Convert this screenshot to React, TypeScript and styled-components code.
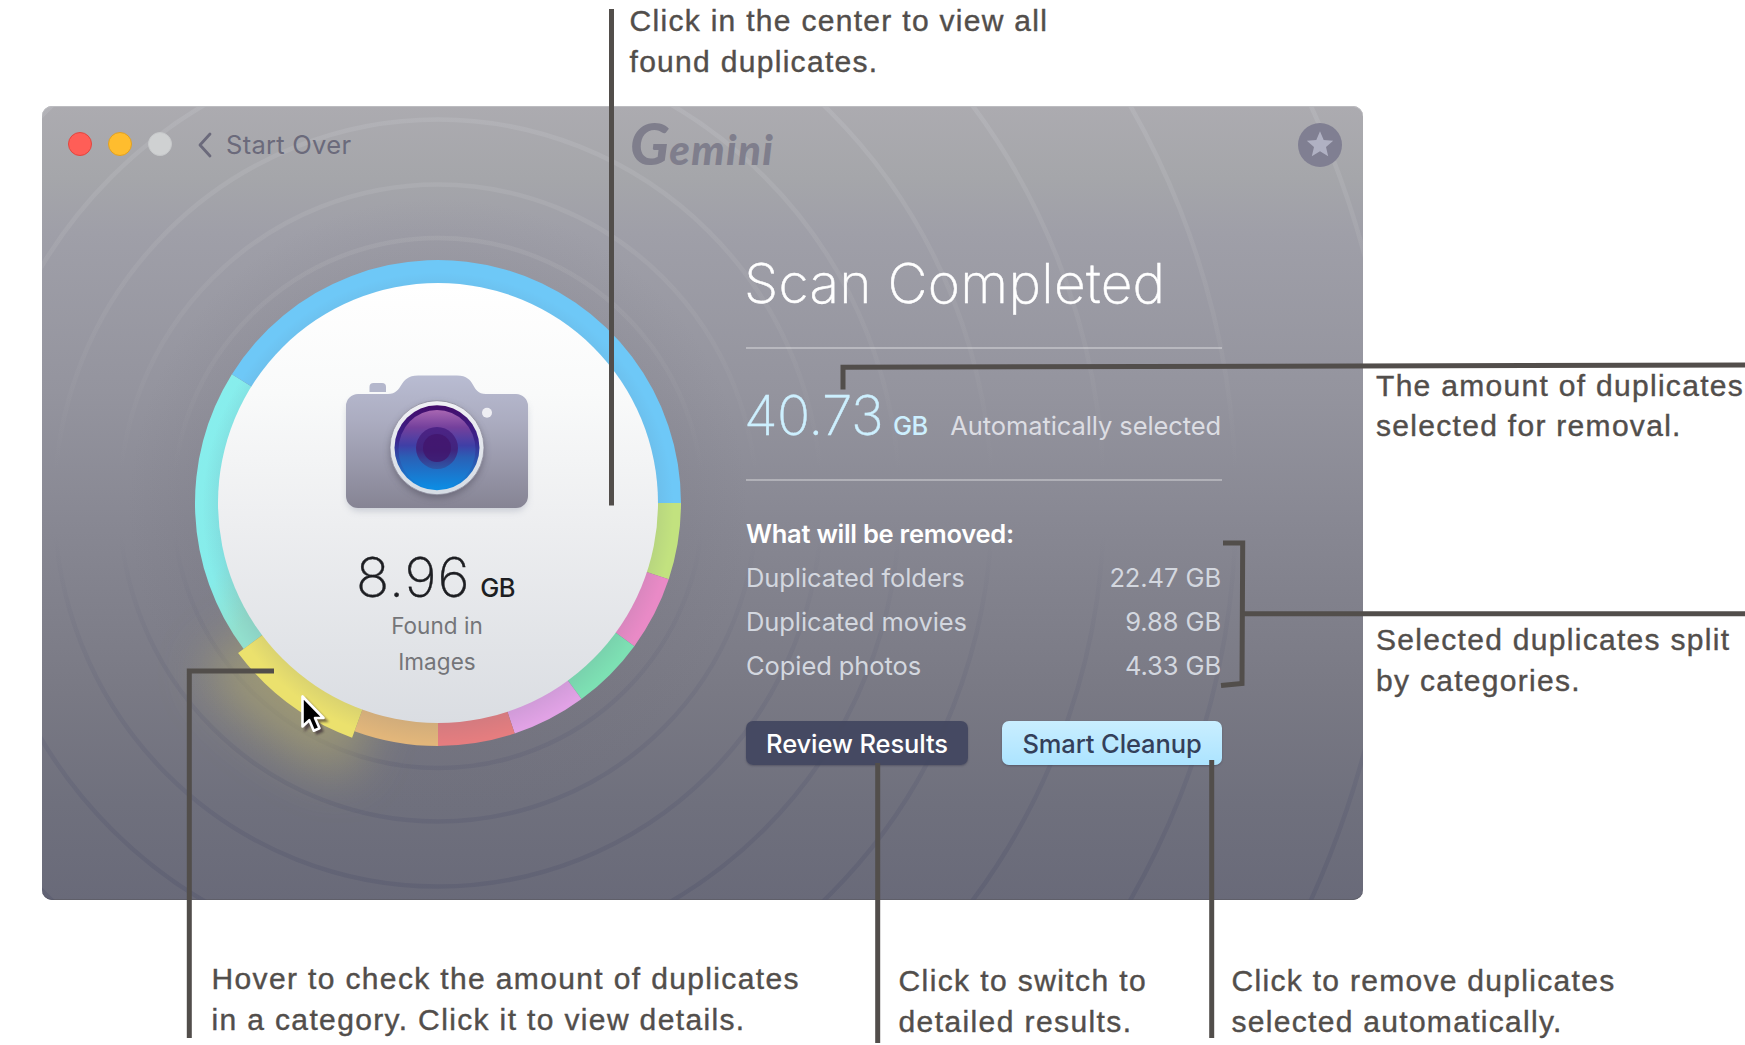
import React from "react";
import styled, { createGlobalStyle } from "styled-components";

const GlobalStyle = createGlobalStyle`
  html, body { margin: 0; padding: 0; background: #fff; }
  *, *::before, *::after { box-sizing: border-box; }
`;

const uiFont = `Inter, "Open Sans", sans-serif`;

const Page = styled.main`
  position: relative;
  width: 1745px;
  height: 1045px;
  overflow: hidden;
  background: #fff;
  display: flex;
  flex-direction: column;
`;

const TopRow = styled.div`
  height: 106px;
  padding-left: 629.5px;
`;

const MiddleRow = styled.div`
  display: flex;
  height: 794px;
  padding-left: 42px;
`;

const SideNotes = styled.div`
  display: flex;
  flex-direction: column;
  gap: 172px;
  padding: 260px 0 0 13px;
`;

const BottomRow = styled.div`
  display: grid;
  grid-template-columns: 687px 333px 1fr;
  align-items: start;
  padding: 58px 0 0 211.5px;
`;

const Note = styled.p<{ $drop?: number; $track?: number; $leading?: number }>`
  margin: 0;
  padding-top: ${(p) => p.$drop ?? 0}px;
  font-family: "Liberation Sans", Arial, sans-serif;
  font-size: 30px;
  line-height: ${(p) => p.$leading ?? 41}px;
  letter-spacing: ${(p) => p.$track ?? 1.3}px;
  color: #524e4b;
  -webkit-text-stroke: 0.4px #524e4b;
  white-space: nowrap;
`;

const AppWindow = styled.section`
  position: relative;
  flex: none;
  width: 1321px;
  height: 794px;
  border-radius: 10px;
  overflow: hidden;
  isolation: isolate;
  font-family: ${uiFont};
  background: linear-gradient(
    180deg,
    #acabb0 0%,
    #a5a6aa 9%,
    #9f9fa8 16%,
    #94949e 36%,
    #888893 52%,
    #797984 74%,
    #6f707d 88%,
    #696a79 100%
  );
  box-shadow: inset 0 1px 0 #bcbcc0, inset 0 -1px 0 #5f5f69;
`;

const Backdrop = styled.svg`
  position: absolute;
  inset: 0;
  z-index: -1;
`;

const TitleBar = styled.header`
  display: grid;
  grid-template-columns: 1fr 146px 1fr;
  align-items: center;
  height: 78px;
  padding: 0 21px 0 26px;
`;

const TitleLeft = styled.div`
  display: flex;
  align-items: center;
`;

const Light = styled.span<{ $fill: string; $rim: string }>`
  width: 24px;
  height: 24px;
  margin: 0 16px 2px 0;
  border-radius: 50%;
  background: ${(p) => p.$fill};
  border: 1px solid ${(p) => p.$rim};
`;

const BackButton = styled.button`
  display: flex;
  align-items: center;
  gap: 14px;
  padding: 0 0 0 10px;
  border: 0;
  background: none;
  color: #6b6a7b;
  font: 400 25.5px/32px ${uiFont};
  letter-spacing: 0.28px;
  white-space: nowrap;
`;

const Wordmark = styled.div`
  display: flex;
  align-items: baseline;
  height: 60px;
  margin: -4px 0 0 -2px;
  font-family: Lato, "Open Sans", sans-serif;
  font-style: italic;
  font-weight: 900;
  color: #7f7e8c;
  white-space: nowrap;
`;

const Initial = styled.span`
  font-size: 58px;
  line-height: 60px;
  letter-spacing: 0;
`;

const Rest = styled.span`
  font-size: 42px;
  line-height: 60px;
  letter-spacing: 1.4px;
`;

const BadgeSlot = styled.div`
  display: flex;
  justify-content: flex-end;
`;

const Body = styled.div`
  display: flex;
  align-items: flex-start;
  padding-left: 153px;
`;

const Dial = styled.div`
  display: grid;
  flex: none;
  width: 486px;
  height: 486px;
  margin-top: 76px;
  & > * { grid-area: 1 / 1; }
`;

const Ring = styled.svg`
  overflow: visible;
`;

const DialContent = styled.div`
  display: flex;
  flex-direction: column;
  align-items: center;
  padding: 110px 2px 0 0;
`;

const DialAmount = styled.div`
  display: flex;
  align-items: baseline;
  gap: 10px;
  height: 66px;
  margin: 24px 3px 0 0;
  line-height: 66px;
  color: #1d1e22;
`;

const Figure = styled.span<{ $track?: number }>`
  font-size: 55px;
  font-weight: 200;
  letter-spacing: ${(p) => p.$track ?? 0}px;
  -webkit-text-stroke: 0.4px currentColor;
`;

const Unit = styled.span`
  font-size: 25.5px;
  font-weight: 500;
  letter-spacing: -0.6px;
`;

const DialCaption = styled.div`
  width: 140px;
  margin-top: -2px;
  text-align: center;
  font-size: 22.5px;
  line-height: 36px;
  letter-spacing: 0.05px;
  color: #747579;
`;

const Panel = styled.div`
  width: 476px;
  margin: 66px 0 0 65px;
`;

const Heading = styled.h1`
  margin: 0 0 31px -2px;
  font-size: 55px;
  line-height: 66px;
  font-weight: 200;
  letter-spacing: 0.3px;
  -webkit-text-stroke: 0.5px currentColor;
  color: #fff;
  white-space: nowrap;
`;

const Rule = styled.hr`
  height: 2px;
  margin: 0;
  border: 0;
  background: rgba(255, 255, 255, 0.32);
`;

const Selected = styled.div`
  display: flex;
  align-items: baseline;
  height: 66px;
  margin: 33px 0 31px -2px;
  padding-right: 1px;
  line-height: 66px;
  color: #cdf0ff;
  white-space: nowrap;
  ${Unit} { margin-left: 10px; }
`;

const SelectedLabel = styled.span`
  margin-left: auto;
  font-size: 25.5px;
  letter-spacing: -0.1px;
  color: #dcdde3;
`;

const List = styled.dl`
  margin: 31px 0 33px;
  padding-right: 1px;
  font-size: 25.5px;
  line-height: 44px;
  letter-spacing: -0.08px;
  color: #d3d7df;
`;

const ListTitle = styled.div`
  font-weight: 600;
  letter-spacing: -0.26px;
  color: #fff;
`;

const Row = styled.div`
  display: flex;
  justify-content: space-between;
  dt, dd { margin: 0; }
`;

const Actions = styled.div`
  display: flex;
  justify-content: space-between;
`;

const Action = styled.button<{ $primary?: boolean }>`
  width: ${(p) => (p.$primary ? 220 : 222)}px;
  height: 44px;
  padding: 1px 0 0;
  border: 0;
  border-radius: 7px;
  font: 500 25.5px/43px ${uiFont};
  letter-spacing: -0.12px;
  white-space: nowrap;
  color: ${(p) => (p.$primary ? "#34405a" : "#fff")};
  background: ${(p) =>
    p.$primary ? "linear-gradient(#c9eeff, #ace4ff)" : "rgba(64, 69, 94, 0.9)"};
  box-shadow: 0 1px 2px rgba(40, 40, 60, 0.35);
`;

const Pointer = styled.svg`
  position: absolute;
  left: 298px;
  top: 690px;
`;

const Leaders = styled.svg`
  position: absolute;
  inset: 0;
  pointer-events: none;
`;

const CENTER = 243;

const segments = [
  { from: 0, to: 18.3, fill: "#c2e27f" },
  { from: 18.3, to: 36.1, fill: "#e98ac6" },
  { from: 36.1, to: 53.8, fill: "#7de0b3" },
  { from: 53.8, to: 71.6, fill: "#e1a2e5" },
  { from: 71.6, to: 90, fill: "#e57d7f" },
  { from: 90, to: 110.1, fill: "#e2b67a" },
  { from: 143.1, to: 212, fill: "url(#aqua)" },
  { from: 212, to: 360, fill: "#6ec8f7" },
];

/* Annular sector between two angles, measured clockwise from three o'clock. */
function sector(from: number, to: number, outer: number, inner = 218) {
  const at = (deg: number, r: number) => {
    const a = (deg * Math.PI) / 180;
    return `${(CENTER + r * Math.cos(a)).toFixed(2)} ${(CENTER + r * Math.sin(a)).toFixed(2)}`;
  };
  return `M${at(from, outer)}A${outer} ${outer} 0 0 1 ${at(to, outer)}L${at(to, inner)}A${inner} ${inner} 0 0 0 ${at(from, inner)}Z`;
}

const ripples = [265, 318.5, 383.5, 461.5, 554, 666, 798, 959];

function Ripples() {
  return (
    <Backdrop width="1321" height="794" viewBox="0 0 1321 794">
      <defs>
        <linearGradient id="ripple" gradientUnits="userSpaceOnUse" x1="0" y1="0" x2="0" y2="794">
          <stop offset="0" stopColor="#bcbdc2" stopOpacity="0.42" />
          <stop offset="0.2" stopColor="#b8b8bc" stopOpacity="0.22" />
          <stop offset="0.46" stopColor="#b0b0b4" stopOpacity="0" />
          <stop offset="0.54" stopColor="#5a5c74" stopOpacity="0" />
          <stop offset="0.75" stopColor="#5a5c74" stopOpacity="0.22" />
          <stop offset="1" stopColor="#54566c" stopOpacity="0.42" />
        </linearGradient>
        <radialGradient id="halo" gradientUnits="userSpaceOnUse" cx="396" cy="402" r="310">
          <stop offset="0.7" stopColor="#6c6a76" stopOpacity="0.16" />
          <stop offset="1" stopColor="#6c6a76" stopOpacity="0" />
        </radialGradient>
      </defs>
      <circle cx="396" cy="402" r="310" fill="url(#halo)" />
      {ripples.map((r) => (
        <circle key={r} cx="396" cy="397" r={r} fill="none" stroke="url(#ripple)" strokeWidth="4.5" />
      ))}
    </Backdrop>
  );
}

function Donut() {
  return (
    <Ring width="486" height="486" viewBox="0 0 486 486">
      <defs>
        <linearGradient id="aqua" x1="0" y1="0" x2="0.5" y2="1">
          <stop offset="0" stopColor="#88efee" />
          <stop offset="0.7" stopColor="#86ecea" />
          <stop offset="1" stopColor="#92dfcd" />
        </linearGradient>
        <linearGradient id="face" x1="0" y1="0" x2="0" y2="1">
          <stop offset="0" stopColor="#ffffff" />
          <stop offset="0.25" stopColor="#f9fafa" />
          <stop offset="0.55" stopColor="#edeef0" />
          <stop offset="1" stopColor="#dadde2" />
        </linearGradient>
        <radialGradient id="lip" gradientUnits="userSpaceOnUse" cx="243" cy="248" r="243">
          <stop offset="0.88" stopColor="#5c6a80" stopOpacity="0.13" />
          <stop offset="0.97" stopColor="#5c6a80" stopOpacity="0" />
        </radialGradient>
        <filter id="glow" x="-1" y="-1" width="3" height="3">
          <feGaussianBlur stdDeviation="25" />
        </filter>
      </defs>
      <path d={sector(108, 145, 288, 200)} fill="#b3ab6e" opacity="0.62" filter="url(#glow)" />
      {segments.map((s) => (
        <path key={s.from} d={sector(s.from, s.to, 243)} fill={s.fill} />
      ))}
      <path d={sector(110.1, 143.1, 250)} fill="#ebe16d" />
      <circle cx="243" cy="243" r="243" fill="url(#lip)" />
      <circle cx="243" cy="243" r="220" fill="url(#face)" />
    </Ring>
  );
}

function Camera() {
  return (
    <svg width="194" height="150" viewBox="0 0 194 150">
      <defs>
        <linearGradient id="shell" x1="0" y1="0" x2="0" y2="1">
          <stop offset="0" stopColor="#b9bcd2" />
          <stop offset="0.35" stopColor="#abacc0" />
          <stop offset="1" stopColor="#868494" />
        </linearGradient>
        <linearGradient id="bezel" x1="0" y1="0" x2="0" y2="1">
          <stop offset="0" stopColor="#f0f0f4" />
          <stop offset="1" stopColor="#d5dce4" />
        </linearGradient>
        <linearGradient id="glass" x1="0" y1="0" x2="0" y2="1">
          <stop offset="0" stopColor="#a866b2" />
          <stop offset="0.22" stopColor="#74409c" />
          <stop offset="0.45" stopColor="#3f3fa6" />
          <stop offset="0.6" stopColor="#2a60b6" />
          <stop offset="1" stopColor="#0c8de4" />
        </linearGradient>
        <linearGradient id="rim" x1="0" y1="0" x2="0" y2="1">
          <stop offset="0" stopColor="#440c6a" />
          <stop offset="0.4" stopColor="#3b238c" />
          <stop offset="0.7" stopColor="#285eb5" />
          <stop offset="1" stopColor="#0c8de4" />
        </linearGradient>
        <linearGradient id="iris" x1="0" y1="0" x2="0" y2="1">
          <stop offset="0" stopColor="#4d2385" />
          <stop offset="0.55" stopColor="#40247e" />
          <stop offset="1" stopColor="#2d58a8" />
        </linearGradient>
        <filter id="soft" x="-0.3" y="-0.3" width="1.6" height="1.6">
          <feGaussianBlur stdDeviation="3.5" />
        </filter>
      </defs>
      <rect x="7" y="30" width="180" height="111" rx="12" fill="#8f95a8" opacity="0.4" filter="url(#soft)" />
      <path d="M29.5 22V17a4 4 0 0 1 4-4h8.500a4 4 0 0 1 4 4V22Z" fill="#b4b7cc" />
      <path
        d="M18 24H48C64 24 58 5.500 78 5.500H117C137 5.500 130 24 146 24H176A12 12 0 0 1 188 36V126A12 12 0 0 1 176 138H18A12 12 0 0 1 6 126V36A12 12 0 0 1 18 24Z"
        fill="url(#shell)"
      />
      <circle cx="97" cy="81" r="47" fill="#4c4a58" opacity="0.5" filter="url(#soft)" />
      <circle cx="97" cy="77.700" r="47" fill="url(#bezel)" stroke="#8b8a9c" strokeWidth="0.8" />
      <circle cx="97" cy="77.700" r="42.500" fill="url(#rim)" />
      <ellipse cx="97" cy="79.500" rx="38.500" ry="39.500" fill="url(#glass)" />
      <circle cx="97" cy="78" r="21" fill="url(#iris)" />
      <circle cx="97" cy="78" r="14" fill="#42146b" opacity="0.75" />
      <circle cx="147" cy="42.700" r="5" fill="#eeeef3" />
    </svg>
  );
}

const removals = [
  ["Duplicated folders", "22.47 GB"],
  ["Duplicated movies", "9.88 GB"],
  ["Copied photos", "4.33 GB"],
];

const leaderPaths = [
  "M611.500 9V505.500",
  "M843 389.500V367.300L1745 365",
  "M1223 543H1242.700L1242 683.500L1221 685.500",
  "M1242 613.800H1745",
  "M274 671H189.300V1038",
  "M877.700 763V1043",
  "M1211.700 760V1038",
];

const arrow = "M4.500 6.500V36.500L11.300 30.200L15.800 40.700L21.500 38.300L17 28H25.500Z";

export default function App() {
  return (
    <Page>
      <GlobalStyle />
      <TopRow>
        <Note>
          Click in the center to view all
          <br />
          found duplicates.
        </Note>
      </TopRow>

      <MiddleRow>
        <AppWindow>
          <Ripples />
          <TitleBar>
            <TitleLeft>
              <Light $fill="#ff5e57" $rim="#e2463f" />
              <Light $fill="#ffbd2e" $rim="#e0a023" />
              <Light $fill="#cfd1d2" $rim="#c6c8ca" />
              <BackButton>
                <svg width="14" height="26" viewBox="0 0 14 26">
                  <path d="M12 2L2 13L12 24" fill="none" stroke="currentColor" strokeWidth="2.800" strokeLinecap="round" strokeLinejoin="round" />
                </svg>
                Start Over
              </BackButton>
            </TitleLeft>
            <Wordmark>
              <Initial>G</Initial>
              <Rest>emini</Rest>
            </Wordmark>
            <BadgeSlot>
              <svg width="44" height="44" viewBox="0 0 44 44">
                <circle cx="22" cy="22" r="22" fill="#807f92" />
                <path
                  d="M22 8.200L25.700 17L35.200 17.700L28 23.900L30.200 33.200L22 28.200L13.800 33.200L16 23.900L8.800 17.700L18.300 17Z"
                  fill="#b0b1c3"
                />
              </svg>
            </BadgeSlot>
          </TitleBar>

          <Body>
            <Dial>
              <Donut />
              <DialContent>
                <Camera />
                <DialAmount>
                  <Figure $track={0.8}>8.96</Figure>
                  <Unit>GB</Unit>
                </DialAmount>
                <DialCaption>
                  Found in
                  <br />
                  Images
                </DialCaption>
              </DialContent>
            </Dial>

            <Panel>
              <Heading>Scan Completed</Heading>
              <Rule />
              <Selected>
                <Figure $track={-0.6}>40.73</Figure>
                <Unit>GB</Unit>
                <SelectedLabel>Automatically selected</SelectedLabel>
              </Selected>
              <Rule />
              <List>
                <ListTitle>What will be removed:</ListTitle>
                {removals.map(([name, size]) => (
                  <Row key={name}>
                    <dt>{name}</dt>
                    <dd>{size}</dd>
                  </Row>
                ))}
              </List>
              <Actions>
                <Action>Review Results</Action>
                <Action $primary>Smart Cleanup</Action>
              </Actions>
            </Panel>
          </Body>
        </AppWindow>

        <SideNotes>
          <Note $leading={40.4} $track={1.3}>
            The amount of duplicates
            <br />
            selected for removal.
          </Note>
          <Note>
            Selected duplicates split
            <br />
            by categories.
          </Note>
        </SideNotes>
      </MiddleRow>

      <BottomRow>
        <Note $track={1.36}>
          Hover to check the amount of duplicates
          <br />
          in a category. Click it to view details.
        </Note>
        <Note $drop={2} $track={1.4}>
          Click to switch to
          <br />
          detailed results.
        </Note>
        <Note $drop={2}>
          Click to remove duplicates
          <br />
          selected automatically.
        </Note>
      </BottomRow>

      <Leaders width="1745" height="1045" viewBox="0 0 1745 1045">
        {leaderPaths.map((d) => (
          <path key={d} d={d} fill="none" stroke="#524e4b" strokeWidth="5" />
        ))}
      </Leaders>

      <Pointer width="36" height="52" viewBox="0 0 36 52">
        <defs>
          <filter id="cast" x="-0.3" y="-0.3" width="1.6" height="1.6">
            <feGaussianBlur stdDeviation="1" />
          </filter>
        </defs>
        <path d={arrow} transform="translate(3 3)" fill="#2a1a2a" stroke="#2a1a2a" strokeWidth="2" opacity="0.6" filter="url(#cast)" />
        <path d={arrow} fill="#000" stroke="#fff" strokeWidth="2.600" strokeLinejoin="round" />
      </Pointer>
    </Page>
  );
}
